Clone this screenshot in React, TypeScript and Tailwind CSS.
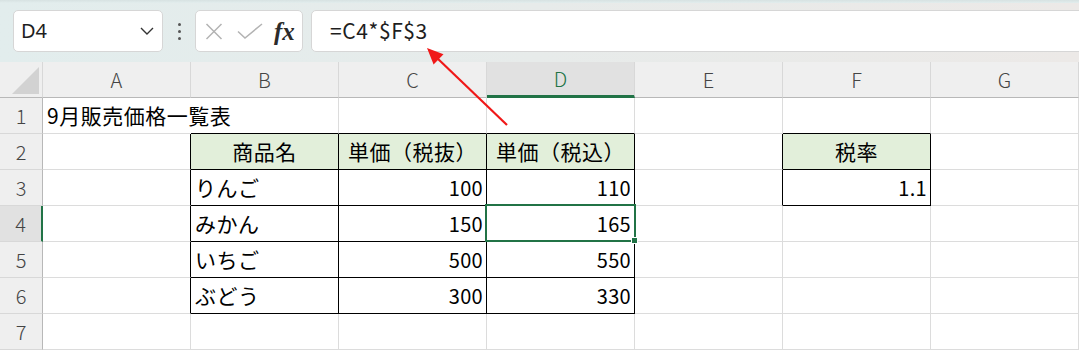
import React from "react";

const COLS = ["A", "B", "C", "D", "E", "F", "G"];
const ROWS = [1, 2, 3, 4, 5, 6, 7];

type Cell = { text: string; align?: "left" | "right" | "center"; fill?: boolean };

const cells: Record<string, Cell> = {
  A1: { text: "9月販売価格一覧表" },
  B2: { text: "商品名", align: "center", fill: true },
  C2: { text: "単価（税抜）", align: "center", fill: true },
  D2: { text: "単価（税込）", align: "center", fill: true },
  F2: { text: "税率", align: "center", fill: true },
  B3: { text: "りんご" },
  C3: { text: "100", align: "right" },
  D3: { text: "110", align: "right" },
  F3: { text: "1.1", align: "right" },
  B4: { text: "みかん" },
  C4: { text: "150", align: "right" },
  D4: { text: "165", align: "right" },
  B5: { text: "いちご" },
  C5: { text: "500", align: "right" },
  D5: { text: "550", align: "right" },
  B6: { text: "ぶどう" },
  C6: { text: "300", align: "right" },
  D6: { text: "330", align: "right" },
};

// bordered ranges (row, column index)
const inTable = (r: number, c: number) =>
  (r >= 2 && r <= 6 && c >= 1 && c <= 3) || (r >= 2 && r <= 3 && c === 5);

const font = { fontFamily: '"Noto Sans CJK JP", "Noto Sans", sans-serif' };

const FormulaBar = () => (
  <div className="relative h-[62px] bg-gradient-to-r from-[#e2eded] to-[#ece9e7]">
    <div className="h-[3px] bg-gradient-to-b from-[#d7e2e2] to-[#e2eded]" />
    <div className="flex items-center pt-[7px] pl-[13px] overflow-hidden">
      {/* name box */}
      <div className="flex items-center justify-between w-[150px] h-[42px] shrink-0 bg-white border border-[#d6d6d6] rounded-[5px] pl-[7px] pr-[8px]">
        <span className="text-[20px] text-[#1e1e1e]" style={{ fontFamily: '"Noto Sans", sans-serif' }}>
          D4
        </span>
        <svg width="14" height="8" viewBox="0 0 14 8" fill="none">
          <path d="M1 1l6 6 6-6" stroke="#333" strokeWidth="1.4" />
        </svg>
      </div>
      {/* dots */}
      <div className="flex flex-col items-center gap-[4px] w-[32px] shrink-0">
        <span className="w-[3px] h-[3px] rounded-full bg-[#555]" />
        <span className="w-[3px] h-[3px] rounded-full bg-[#555]" />
        <span className="w-[3px] h-[3px] rounded-full bg-[#555]" />
      </div>
      {/* cancel / enter / fx */}
      <div className="flex items-center w-[108px] h-[42px] shrink-0 bg-white border border-[#d6d6d6] rounded-[5px] pl-[9px]">
        <svg width="18" height="17" viewBox="0 0 18 17" fill="none">
          <path d="M1.5 1l15 15M16.5 1l-15 15" stroke="#b3b3b3" strokeWidth="1.5" />
        </svg>
        <svg width="26" height="16" viewBox="0 0 26 16" fill="none" className="ml-[14px]">
          <path d="M1 8.5l7 6.5L25 1" stroke="#b3b3b3" strokeWidth="1.5" />
        </svg>
        <span
          className="ml-[11px] text-[25px] italic font-bold text-[#2b2b2b] leading-none"
          style={{ fontFamily: '"Liberation Serif", serif' }}
        >
          fx
        </span>
      </div>
      {/* formula input */}
      <div className="flex items-center w-[820px] h-[42px] shrink-0 ml-[8px] bg-white border border-[#d6d6d6] rounded-[5px] pl-[18px]">
        <span className="text-[21px] tracking-[0.6px] text-[#1e1e1e]" style={font}>
          =C4*$F$3
        </span>
      </div>
    </div>
  </div>
);

const ColumnHeaders = () => (
  <div className="flex h-[36px]">
    <div className="relative w-[43px] shrink-0 bg-[#efefef] border-r border-b border-r-[#d8d8d8] border-b-[#b8b8b8]">
      <svg width="27" height="27" viewBox="0 0 27 27" className="absolute left-[12px] top-[5px]">
        <path d="M0 27L27 0V27Z" fill="#d2d2d2" />
      </svg>
    </div>
    {COLS.map((c) => (
      <div
        key={c}
        className={
          c === "D"
            ? "w-[148px] shrink-0 flex items-center justify-center bg-[#e1e1e1] border-r border-r-[#d8d8d8] border-b-[3px] border-b-[#217346] text-[#217346] text-[20px] font-light"
            : "w-[148px] shrink-0 flex items-center justify-center bg-[#efefef] border-r border-b border-r-[#d8d8d8] border-b-[#b8b8b8] text-[#444] text-[20px] font-light"
        }
        style={font}
      >
        {c}
      </div>
    ))}
  </div>
);

const GridCell = ({ r, c }: { r: number; c: number }) => {
  const key = COLS[c] + r;
  const cell = cells[key];
  const rightBlack = inTable(r, c) || inTable(r, c + 1);
  const bottomBlack = inTable(r, c) || inTable(r + 1, c);
  const selected = key === "D4";
  // the title in A1 runs over into B1, which hides that gridline
  const spills = key === "A1";

  return (
    <div
      className={[
        "relative w-[148px] h-[36px] shrink-0 flex items-center border-r border-b text-black whitespace-nowrap",
        spills ? "border-r-transparent z-10" : rightBlack ? "border-r-black" : "border-r-[#dcdcdc]",
        bottomBlack ? "border-b-black" : "border-b-[#dcdcdc]",
        cell?.fill ? "bg-[#e2efda]" : "",
        cell?.align === "right"
          ? "justify-end pr-[3px] text-[20px] tracking-[0.3px]"
          : cell?.align === "center"
          ? "justify-center text-[21px] tracking-[0.5px]"
          : "justify-start pl-[4px] text-[21px] tracking-[0.5px]",
        selected ? "z-10" : "",
      ].join(" ")}
      style={font}
    >
      {cell?.text}
      {selected && (
        <div className="absolute -left-[2px] -top-[2px] w-[151px] h-[38px] border-2 border-[#217346]">
          <div className="absolute -right-[4px] -bottom-[4px] w-[7px] h-[7px] bg-[#217346] border border-white" />
        </div>
      )}
    </div>
  );
};

const Sheet = () => (
  <div className="bg-white">
    <ColumnHeaders />
    {ROWS.map((r) => (
      <div key={r} className="flex">
        <div
          className={
            r === 4
              ? "w-[43px] h-[36px] shrink-0 flex items-center justify-center bg-[#e1e1e1] border-r-2 border-b border-r-[#217346] border-b-[#d8d8d8] text-[#444] text-[20px] font-light"
              : "w-[43px] h-[36px] shrink-0 flex items-center justify-center bg-[#efefef] border-r border-b border-r-[#b8b8b8] border-b-[#d8d8d8] text-[#444] text-[20px] font-light"
          }
          style={font}
        >
          {r}
        </div>
        {COLS.map((_, c) => (
          <GridCell key={c} r={r} c={c} />
        ))}
      </div>
    ))}
  </div>
);

export default function App() {
  return (
    <div className="relative w-[1079px] h-[350px] overflow-hidden bg-white">
      <FormulaBar />
      <Sheet />
      {/* red callout arrow */}
      <svg width="1079" height="350" className="absolute left-0 top-0 pointer-events-none z-20">
        <line x1="507" y1="125" x2="436" y2="57" stroke="#f01818" strokeWidth="2.2" />
        <path d="M427 48 L443.5 54.2 L433.6 64.4 Z" fill="#f01818" />
      </svg>
    </div>
  );
}
